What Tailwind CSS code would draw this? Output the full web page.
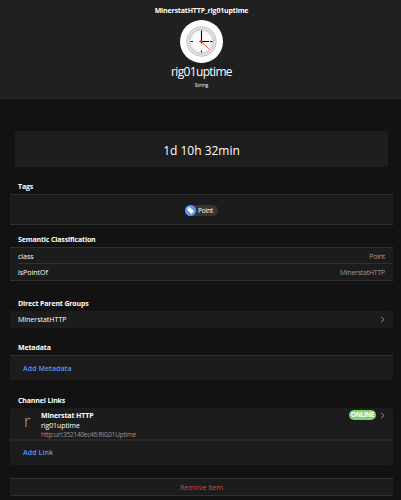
<!DOCTYPE html>
<html lang="en">
<head>
<meta charset="utf-8">
<title>rig01uptime</title>
<script src="https://cdn.jsdelivr.net/npm/@tailwindcss/browser@4"></script>
</head>
<body class="w-[401px] h-[500px] overflow-hidden bg-[#121212] text-white font-['Open_Sans','Noto_Sans',sans-serif] text-[7px] leading-[10px] whitespace-nowrap">
<header class="h-[99px] bg-[#202020] border-b border-[#2c2c2c] flex flex-col items-center pt-[6px] pl-[2px]">
  <h1 class="font-bold text-[7px] leading-[10px] tracking-[-0.16px]">MinerstatHTTP_rig01uptime</h1>
  <svg class="mt-[4px] size-[43px] shrink-0" viewBox="0 0 43 43">
    <circle cx="21.5" cy="21.5" r="21.5" fill="#fff"/>
    <circle cx="21.5" cy="21.5" r="14.8" fill="#e2e4e4" stroke="#bcc0c0" stroke-width=".9"/>
    <circle cx="21.5" cy="21.5" r="12" fill="#fcfcfc" stroke="#b9bcbc" stroke-width="1"/>
    <circle cx="21.5" cy="21.5" r="10.3" fill="none" stroke="#aaa" stroke-width="1" stroke-dasharray=".4 1.757"/>
    <path d="M21.5 10.5v2M21.5 30.5v2M10.5 21.5h2.5M30 21.5h2.5" stroke="#111" stroke-width="1"/>
    <path d="M21.5 23.5V11M19.5 21.5h9.5" stroke="#000" stroke-width="1.1"/>
    <path d="M20.5 20.5l8.8 8.8" stroke="#d9492c" stroke-width=".9"/>
    <circle cx="21.5" cy="21.5" r="1.2" fill="#d9492c"/>
  </svg>
  <div class="mt-[1px] text-[12px] leading-[16px] tracking-[-0.65px]">rig01uptime</div>
  <div class="mt-[1px] text-[5px] leading-[8px]">String</div>
</header>
<main class="pl-[10px] pr-[8px] flex flex-col">
  <div class="mt-[32px] mx-[5px] h-[36px] bg-[#1e1e1e] rounded-[2px] flex items-center justify-center text-[12px] pt-[3px]">1d 10h 32min</div>

  <h2 class="mt-[15px] h-[12px] pl-[8px] font-bold tracking-[-0.15px]">Tags</h2>
  <section class="h-[31px] bg-[#1c1c1c] border-y border-[#303030] flex items-center justify-center">
    <div class="mt-[1px] h-[11px] w-[33px] rounded-full bg-[#353535] flex items-center gap-[2px] text-[6.5px] tracking-[-0.15px]">
      <svg class="size-[11px] shrink-0" viewBox="0 0 11 11"><circle cx="5.5" cy="5.5" r="5.5" fill="#5b97f5"/><path d="M2.4 2.9v2.2l3.4 3.4c.3.3.7.3 1 0l1.7-1.7c.3-.3.3-.7 0-1L5.1 2.4H2.9z" fill="#fff"/><circle cx="3.7" cy="3.7" r=".4" fill="#5b97f5"/></svg>
      <span class="pt-[1px]">Point</span>
    </div>
  </section>

  <h2 class="mt-[10px] h-[12px] pl-[8px] font-bold tracking-[-0.15px]">Semantic Classification</h2>
  <section class="h-[34px] bg-[#1c1c1c] border-y border-[#303030]">
    <div class="h-[16px] ml-[8px] pr-[8px] pt-[2px] border-b border-[#303030] flex items-center justify-between"><span>class</span><span class="text-[#989898] tracking-[-0.25px]">Point</span></div>
    <div class="h-[16px] ml-[8px] pr-[8px] pt-[2px] flex items-center justify-between"><span>isPointOf</span><span class="text-[#989898] tracking-[-0.25px]">MinerstatHTTP</span></div>
  </section>

  <h2 class="mt-[18px] h-[12px] pl-[8px] font-bold tracking-[-0.15px]">Direct Parent Groups</h2>
  <section class="h-[17px] bg-[#1c1c1c] rounded-[2px] px-[8px] flex items-center justify-between">
    <span class="pt-px">MinerstatHTTP</span>
    <svg class="w-[5px] h-[7px]" viewBox="0 0 5 7"><path d="M1.2 .8L4 3.5 1.2 6.2" fill="none" stroke="#959595" stroke-width="1"/></svg>
  </section>

  <h2 class="mt-[15px] h-[12px] pl-[8px] font-bold tracking-[-0.15px]">Metadata</h2>
  <section class="h-[25px] bg-[#1c1c1c] border-t border-[#303030] rounded-b-[2px] pl-[13px] pt-px flex items-center font-semibold tracking-[0.07px] text-[#5b97f5]"><span>Add Metadata</span></section>

  <h2 class="mt-[16px] h-[12px] pl-[8px] font-bold tracking-[-0.15px]">Channel Links</h2>
  <section class="h-[57px] bg-[#1c1c1c] rounded-[2px]">
    <div class="h-[33px] border-b-2 border-[#292929] pl-[14px] pr-[8px] flex">
      <div class="w-[17px] pt-[5px] text-[17px] leading-[16px] font-light text-[#b0b0b0]">r</div>
      <div class="flex-1 pt-[3px]">
        <div class="font-bold tracking-[-0.12px]">Minerstat HTTP</div>
        <div class="font-medium leading-[9px] tracking-[-0.08px]">rig01uptime</div>
        <div class="text-[6.5px] leading-[9px] tracking-[-0.25px] text-[#989898]">http:url:352140ec46:RIG01Uptime</div>
      </div>
      <div class="mt-[2px] h-[10px] flex items-center gap-[4px]">
        <span class="w-[27px] h-[10px] rounded-full bg-[#7ed36b] text-[6.5px] leading-[10px] tracking-[-0.3px] font-bold text-center">ONLINE</span>
        <svg class="w-[5px] h-[7px]" viewBox="0 0 5 7"><path d="M1.2 .8L4 3.5 1.2 6.2" fill="none" stroke="#959595" stroke-width="1"/></svg>
      </div>
    </div>
    <div class="h-[24px] pl-[13px] flex items-center font-semibold tracking-[0.1px] text-[#5b97f5]"><span>Add Link</span></div>
  </section>

  <section class="mt-[13px] h-[18px] bg-[#1c1c1c] border-y border-[#303030] pt-px flex items-center justify-center text-[#dc4a35]"><span>Remove Item</span></section>
</main>
</body>
</html>
